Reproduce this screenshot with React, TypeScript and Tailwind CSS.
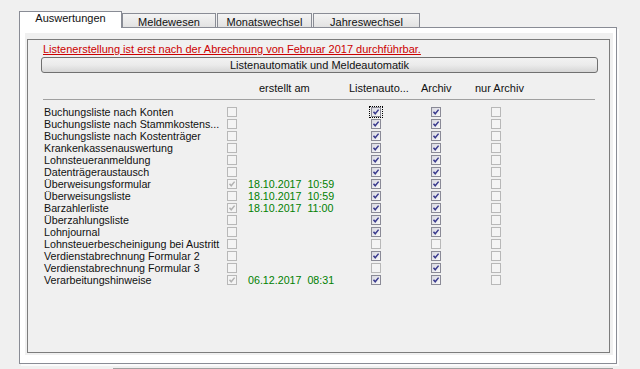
import React from "react";

type Box = "on" | "off" | "grayOn";

const rows: { label: string; made: Box; date?: string; auto: Box; archiv: Box }[] = [
  { label: "Buchungsliste nach Konten", made: "off", auto: "on", archiv: "on" },
  { label: "Buchungsliste nach Stammkostens...", made: "off", auto: "on", archiv: "on" },
  { label: "Buchungsliste nach Kostenträger", made: "off", auto: "on", archiv: "on" },
  { label: "Krankenkassenauswertung", made: "off", auto: "on", archiv: "on" },
  { label: "Lohnsteueranmeldung", made: "off", auto: "on", archiv: "on" },
  { label: "Datenträgeraustausch", made: "off", auto: "on", archiv: "on" },
  { label: "Überweisungsformular", made: "grayOn", date: "18.10.2017  10:59", auto: "on", archiv: "on" },
  { label: "Überweisungsliste", made: "off", date: "18.10.2017  10:59", auto: "on", archiv: "on" },
  { label: "Barzahlerliste", made: "grayOn", date: "18.10.2017  11:00", auto: "on", archiv: "on" },
  { label: "Überzahlungsliste", made: "off", auto: "on", archiv: "on" },
  { label: "Lohnjournal", made: "off", auto: "on", archiv: "on" },
  { label: "Lohnsteuerbescheinigung bei Austritt", made: "off", auto: "off", archiv: "off" },
  { label: "Verdienstabrechnung Formular 2", made: "off", auto: "on", archiv: "on" },
  { label: "Verdienstabrechnung Formular 3", made: "off", auto: "off", archiv: "on" },
  { label: "Verarbeitungshinweise", made: "grayOn", date: "06.12.2017  08:31", auto: "on", archiv: "on" },
];

function Check({ state, focus }: { state: Box; focus?: boolean }) {
  const on = state === "on";
  return (
    <div className="relative w-[10px] h-[10px] shrink-0">
      <div
        className={
          on
            ? "w-[10px] h-[10px] border border-[#8a8a96] bg-gradient-to-br from-[#d8d8e0] to-[#fafafa]"
            : "w-[10px] h-[10px] border border-[#b8b8b8] bg-[#f4f4f4]"
        }
      >
        {state !== "off" && (
          <svg width="8" height="8" viewBox="0 0 8 8" className="block">
            <path
              d="M1.5 3.8 L3.2 5.8 L6.6 1.6"
              fill="none"
              stroke={on ? "#3a3a8e" : "#b2b2b2"}
              strokeWidth="1.5"
            />
          </svg>
        )}
      </div>
      {focus && (
        <div className="absolute -left-[2px] -top-[1px] w-[14px] h-[12px] border border-dotted border-black" />
      )}
    </div>
  );
}

export default function App() {
  return (
    <div className="w-[640px] h-[369px] overflow-hidden bg-[#f0f0f0] pl-[19px] pt-[11px] font-['Liberation_Sans',Arial,sans-serif] text-[11px] leading-[13px] text-[#111]">
      {/* tabs */}
      <div className="flex items-end h-[16px]">
        <div className="relative z-10 w-[103px] h-[17px] -mb-[1px] bg-white border-x border-t border-[#898c95] text-center">
          Auswertungen
        </div>
        <div className="w-[94px] h-[14px] border-x border-t border-[#898c95] bg-gradient-to-b from-[#f4f4f4] to-[#e2e2e2] text-center pt-[2px]">
          Meldewesen
        </div>
        <div className="w-[95px] h-[14px] ml-[1px] border-x border-t border-[#898c95] bg-gradient-to-b from-[#f4f4f4] to-[#e2e2e2] text-center pt-[2px]">
          Monatswechsel
        </div>
        <div className="w-[107px] h-[14px] ml-[1px] border-x border-t border-[#898c95] bg-gradient-to-b from-[#f4f4f4] to-[#e2e2e2] text-center pt-[2px]">
          Jahreswechsel
        </div>
      </div>

      {/* tab page */}
      <div className="flex w-[598px] h-[337px] border border-[#898c95] bg-white pt-[5px] pl-[5px] pr-[3px] pb-[8px] shadow-[2px_2px_0_#fbfbfb]">
        <div className="flex-1 bg-[#f0f0f0] pl-[2px] pt-[6px]">
          <div className="w-[583px] h-[314px] border border-[#7c7c7c] pl-[13px] pt-[3px]">
            <div className="ml-[2px] text-[#cc0000] underline underline-offset-[1px]">
              Listenerstellung ist erst nach der Abrechnung von Februar 2017 durchführbar.
            </div>
            <div className="mt-[1px] w-[557px] h-[16px] rounded-[3px] border border-[#707070] bg-gradient-to-b from-[#f2f2f2] via-[#ebebeb] to-[#d6d6d6] flex items-center justify-center leading-[12px]">
              Listenautomatik und Meldeautomatik
            </div>

            {/* header */}
            <div className="flex mt-[9px] h-[13px]">
              <div className="ml-[218px] w-[90px]">erstellt am</div>
              <div className="w-[72px]">Listenauto...</div>
              <div className="w-[54px]">Archiv</div>
              <div>nur Archiv</div>
            </div>
            <div className="mt-[4px] ml-[2px] w-[552px] border-t border-[#a0a0a0]" />

            <div className="mt-[6px] ml-[3px]">
              {rows.map((r, i) => (
                <div key={r.label} className="flex items-center h-[12px]">
                  <div className="w-[183px] whitespace-nowrap text-[10.7px]">{r.label}</div>
                  <Check state={r.made} />
                  <div className="ml-[11px] w-[123px] whitespace-pre text-[#008000] text-[10.7px]">{r.date ?? ""}</div>
                  <Check state={r.auto} focus={i === 0} />
                  <div className="w-[50px]" />
                  <Check state={r.archiv} />
                  <div className="w-[50px]" />
                  <Check state="off" />
                </div>
              ))}
            </div>
          </div>
        </div>
      </div>

      <div className="mt-[4px] ml-[94px] w-[500px] border-t border-[#a0a0a0]" />
    </div>
  );
}
